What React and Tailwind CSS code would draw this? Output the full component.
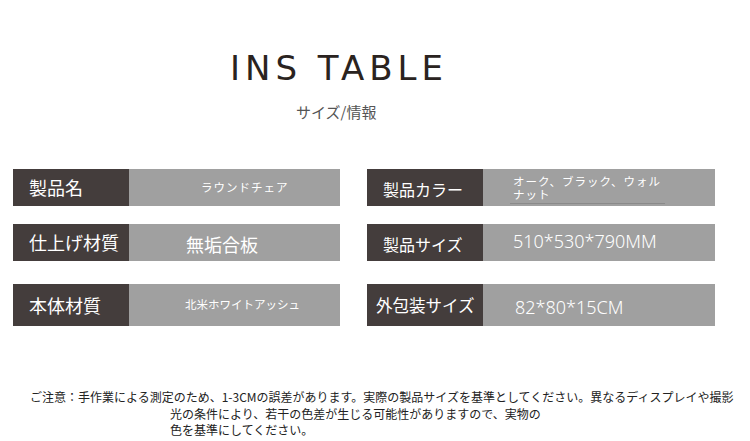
const font = { fontFamily: '"Noto Sans CJK JP", "Noto Sans", sans-serif' }
const latin = { fontFamily: '"Noto Sans", "Noto Sans CJK JP", sans-serif' }

const rows = [
  {
    h: 'h-[37px]',
    left: { label: '製品名', value: 'ラウンドチェア', valueCls: 'pl-[72px] text-[11.5px] tracking-[1px]' },
    right: { label: '製品カラー', value: null, labelCls: 'pl-[16px] text-[16px] pt-[3px]' },
  },
  {
    h: 'h-[37px]',
    left: { label: '仕上げ材質', value: '無垢合板', valueCls: 'pl-[57px] text-[18px] pt-[3px]' },
    right: { label: '製品サイズ', value: '510*530*790MM', valueCls: 'pl-[30px] text-[18px] pb-[2px] font-light', labelCls: 'pl-[16px] text-[16px] pt-[2px]', latin: true },
  },
  {
    h: 'h-[42px]',
    left: { label: '本体材質', value: '北米ホワイトアッシュ', valueCls: 'pl-[56px] text-[11.5px]' },
    right: { label: '外包装サイズ', value: '82*80*15CM', valueCls: 'pl-[32px] text-[18px] pt-[4px] font-light', labelCls: 'pl-[9px] text-[16.5px]', latin: true },
  },
]

function Cell({ label, children, grayW, labelCls = 'pl-[16px] text-[18px]' }) {
  return (
    <div className="flex h-full">
      <div className={`w-[116px] h-full bg-[#443d3c] text-white flex items-center whitespace-nowrap ${labelCls}`}>
        {label}
      </div>
      <div className={`${grayW} h-full bg-[#a0a0a0] text-white flex items-center`}>{children}</div>
    </div>
  )
}

export default function App() {
  return (
    <div className="w-[750px] h-[441px] bg-white overflow-hidden relative" style={font}>
      <div className="pt-[46px] pl-[230px]">
        <div
          className="text-[34px] leading-[44px] tracking-[5px] text-[#2a2320]"
          style={{ fontFamily: '"DejaVu Sans", sans-serif' }}
        >
          INS TABLE
        </div>
      </div>
      <div className="mt-[12px] pl-[296px] text-[15px] leading-[20px] text-[#555]">サイズ/情報</div>

      <div className="mt-[47px] flex flex-col">
        {rows.map((r, i) => (
          <div key={i} className={`flex ${r.h} ${i === 1 ? 'mt-[18px]' : i === 2 ? 'mt-[23px]' : ''}`}>
            <div className="ml-[13px]">
              <Cell label={r.left.label} grayW="w-[211px]">
                <span className={r.left.valueCls}>{r.left.value}</span>
              </Cell>
            </div>
            <div className="ml-[27px]">
              <Cell label={r.right.label} grayW="w-[232px]" labelCls={r.right.labelCls}>
                {r.right.value ? (
                  <span className={r.right.valueCls} style={r.right.latin ? latin : undefined}>
                    {r.right.value}
                  </span>
                ) : (
                  <div className="pl-[30px] text-[11.5px] leading-[13px] tracking-[1px] pt-[4px]">
                    <div>オーク、ブラック、ウォル</div>
                    <div className="border-b border-[#8a8a8a] w-[155px] pb-[2px] -ml-[3px] pl-[3px]">ナット</div>
                  </div>
                )}
              </Cell>
            </div>
          </div>
        ))}
      </div>

      <div className="mt-[62px] text-[12px] leading-[17px] text-[#222]">
        <div className="pl-[30px] whitespace-nowrap">
          ご注意：手作業による測定のため、1-3CMの誤差があります。実際の製品サイズを基準としてください。異なるディスプレイや撮影
        </div>
        <div className="pl-[170px]">光の条件により、若干の色差が生じる可能性がありますので、実物の</div>
        <div className="pl-[170px] -mt-[1px]">色を基準にしてください。</div>
      </div>
    </div>
  )
}
